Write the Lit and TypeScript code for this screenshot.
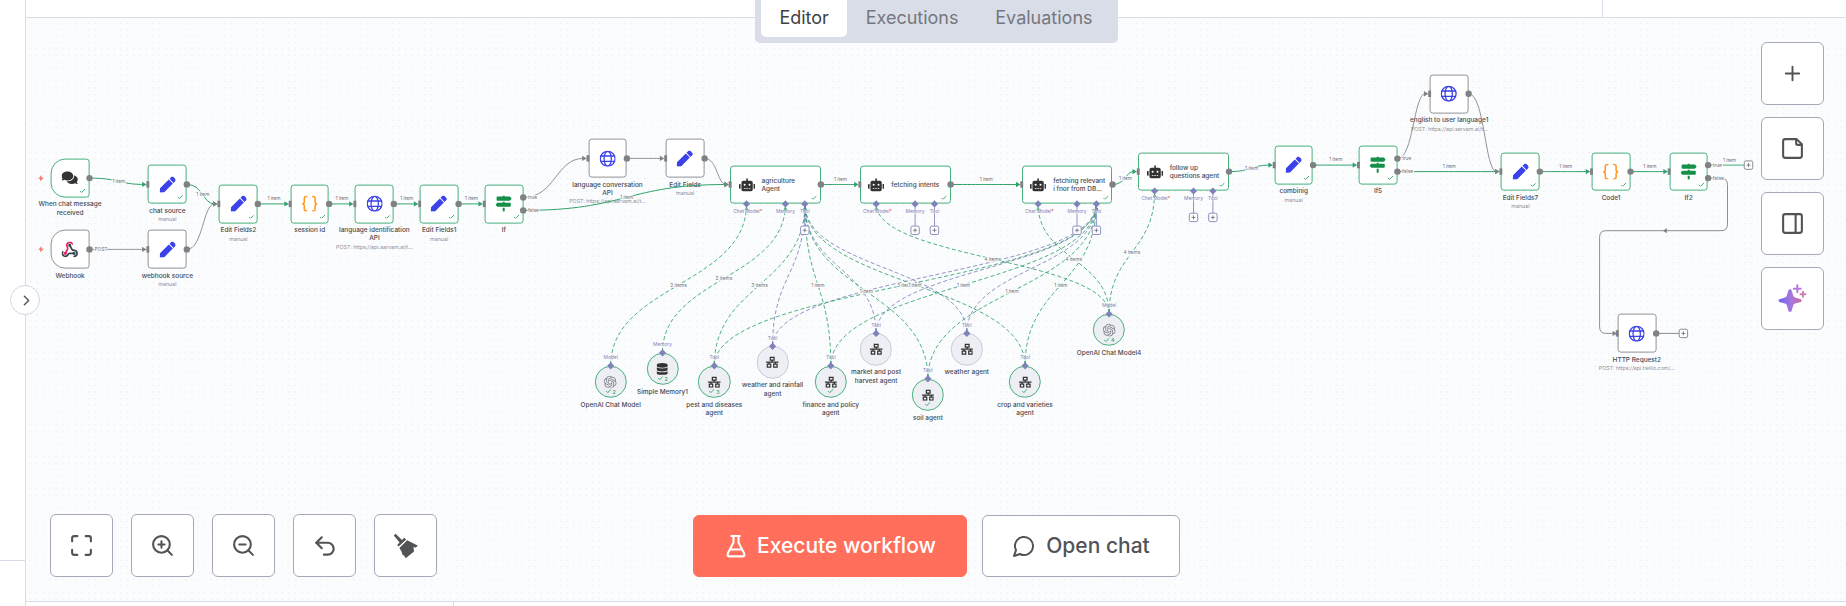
import { LitElement, html, svg, css, nothing } from "lit";
import { customElement, property } from "lit/decorators.js";
import { classMap } from "lit/directives/class-map.js";

const PEN = "M290.74 93.24l128.02 128.02-277.99 277.99-114.14 12.6C11.35 513.54-1.56 500.62.14 485.34l12.7-114.22 277.9-277.88zm207.2-19.06l-60.11-60.11c-18.75-18.75-49.16-18.75-67.91 0l-56.55 56.55 128.02 128.02 56.55-56.55c18.75-18.76 18.75-49.16 0-67.91z";
const COMMENTS = "M416 192c0-88.4-93.1-160-208-160S0 103.6 0 192c0 34.3 14.1 65.9 38 92-13.4 30.2-35.5 54.2-35.8 54.5-2.2 2.3-2.8 5.7-1.5 8.7S4.8 352 8 352c36.6 0 66.9-12.3 88.7-25 32.2 15.7 70.3 25 111.3 25 114.9 0 208-71.6 208-160zm122 220c23.9-26 38-57.7 38-92 0-66.9-53.5-124.2-129.3-148.1.9 6.6 1.3 13.3 1.3 20.1 0 105.9-107.7 192-240 192-10.8 0-21.3-.8-31.7-1.9C207.8 439.6 281.8 480 368 480c41 0 79.1-9.2 111.3-25 21.8 12.7 52.1 25 88.7 25 3.2 0 6.1-1.9 7.3-4.8 1.3-2.9.7-6.3-1.5-8.7-.3-.3-22.4-24.2-35.8-54.5z";
const SIGNS = "M507.31 84.69L464 41.37c-6-6-14.14-9.37-22.63-9.37H288V16c0-8.84-7.16-16-16-16h-32c-8.84 0-16 7.16-16 16v16H56c-13.25 0-24 10.75-24 24v80c0 13.25 10.75 24 24 24h385.37c8.49 0 16.62-3.37 22.63-9.37l43.31-43.31c6.25-6.26 6.25-16.38 0-22.63zM224 496c0 8.84 7.16 16 16 16h32c8.84 0 16-7.16 16-16V384h-64v112zm232-272H288v-32h-64v32H70.63c-8.49 0-16.62 3.37-22.63 9.37L4.69 276.69c-6.25 6.25-6.25 16.38 0 22.63L48 342.63c6 6 14.14 9.37 22.63 9.37H456c13.25 0 24-10.75 24-24v-80c0-13.25-10.75-24-24-24z";
const ROBOT = "M32,224H64V416H32A31.96,31.96,0,0,1,0,384V256A31.96,31.96,0,0,1,32,224Zm512-48V448a64.06,64.06,0,0,1-64,64H160a64.06,64.06,0,0,1-64-64V176a79.97,79.97,0,0,1,80-80H288V32a32,32,0,0,1,64,0V96H464A79.97,79.97,0,0,1,544,176ZM264,256a40,40,0,1,0-40,40A40,40,0,0,0,264,256Zm-8,128H192v32h64Zm96,0H288v32h64ZM456,256a40,40,0,1,0-40,40A40,40,0,0,0,456,256Zm-8,128H384v32h64ZM640,256V384a31.96,31.96,0,0,1-32,32H576V224h32A31.96,31.96,0,0,1,640,256Z";
const DATABASE = "M448 73.143v45.714C448 159.143 347.667 192 224 192S0 159.143 0 118.857V73.143C0 32.857 100.333 0 224 0s224 32.857 224 73.143zM448 176v102.857C448 319.143 347.667 352 224 352S0 319.143 0 278.857V176c48.125 33.143 136.208 48.572 224 48.572S399.874 209.143 448 176zm0 160v102.857C448 479.143 347.667 512 224 512S0 479.143 0 438.857V336c48.125 33.143 136.208 48.572 224 48.572S399.874 369.143 448 336z";
const OPENAI = "M22.2819 9.8211a5.9847 5.9847 0 0 0-.5157-4.9108 6.0462 6.0462 0 0 0-6.5098-2.9A6.0651 6.0651 0 0 0 4.9807 4.1818a5.9847 5.9847 0 0 0-3.9977 2.9 6.0462 6.0462 0 0 0 .7427 7.0966 5.98 5.98 0 0 0 .511 4.9107 6.051 6.051 0 0 0 6.5146 2.9001A5.9847 5.9847 0 0 0 13.2599 24a6.0557 6.0557 0 0 0 5.7718-4.2058 5.9894 5.9894 0 0 0 3.9977-2.9001 6.0557 6.0557 0 0 0-.7475-7.0729zm-9.022 12.6081a4.4755 4.4755 0 0 1-2.8764-1.0408l.1419-.0804 4.7783-2.7582a.7948.7948 0 0 0 .3927-.6813v-6.7369l2.02 1.1686a.071.071 0 0 1 .038.052v5.5826a4.504 4.504 0 0 1-4.4945 4.4944zm-9.6607-4.1254a4.4708 4.4708 0 0 1-.5346-3.0137l.142.0852 4.783 2.7582a.7712.7712 0 0 0 .7806 0l5.8428-3.3685v2.3324a.0804.0804 0 0 1-.0332.0615L9.74 19.9502a4.4992 4.4992 0 0 1-6.1408-1.6464zM2.3408 7.8956a4.485 4.485 0 0 1 2.3655-1.9728V11.6a.7664.7664 0 0 0 .3879.6765l5.8144 3.3543-2.0201 1.1685a.0757.0757 0 0 1-.071 0l-4.8303-2.7865A4.504 4.504 0 0 1 2.3408 7.872zm16.5963 3.8558L13.1038 8.364 15.1192 7.2a.0757.0757 0 0 1 .071 0l4.8303 2.7913a4.4944 4.4944 0 0 1-.6765 8.1042v-5.6772a.79.79 0 0 0-.407-.667zm2.0107-3.0231l-.142-.0852-4.7735-2.7818a.7759.7759 0 0 0-.7854 0L9.409 9.2297V6.8974a.0662.0662 0 0 1 .0284-.0615l4.8303-2.7866a4.4992 4.4992 0 0 1 6.6802 4.66zM8.3065 12.863l-2.02-1.1638a.0804.0804 0 0 1-.038-.0567V6.0742a4.4992 4.4992 0 0 1 7.3757-3.4537l-.142.0805L8.704 5.459a.7948.7948 0 0 0-.3927.6813zm1.0976-2.3654l2.602-1.4998 2.6069 1.4998v2.9994l-2.5974 1.4997-2.6067-1.4997Z";

/* Glyphs of the canvas nodes; each fills its own box. */
const glyph = (name: string) => {
  switch (name) {
    case "pen":
      return html`<svg viewBox="0 0 512 512" fill="#3b42e9"><path d=${PEN} /></svg>`;
    case "chat":
      return html`<svg viewBox="0 0 576 512" fill="#333"><path d=${COMMENTS} /></svg>`;
    case "signs":
      return html`<svg viewBox="0 0 512 512" fill="#159049"><path d=${SIGNS} /></svg>`;
    case "robot":
      return html`<svg viewBox="0 0 640 512" fill="#333"><path d=${ROBOT} /></svg>`;
    case "database":
      return html`<svg viewBox="-32 -10 512 532" fill="#333"><path d=${DATABASE} /></svg>`;
    case "openai":
      return html`<svg viewBox="0 0 24 24" fill="#7d7d87"><path d=${OPENAI} /></svg>`;
    case "globe":
      return html`<svg viewBox="0 0 24 24" fill="none" stroke="#3b42e9" stroke-width="1.9">
        <circle cx="12" cy="12" r="11" /><ellipse cx="12" cy="12" rx="5.4" ry="11" /><path d="M1.8 8h20.4M1.8 16h20.4" />
      </svg>`;
    case "code":
      return html`<svg viewBox="0 0 24 24" fill="none" stroke="#ff9922" stroke-width="2.3">
        <path d="M8.5 1.3H6.8C5 1.3 4 2.4 4 4v4.6C4 10.7 3 12 .8 12 3 12 4 13.3 4 15.4V20c0 1.6 1 2.7 2.8 2.7h1.7M15.5 1.3h1.7C19 1.3 20 2.4 20 4v4.6c0 2.1 1 3.4 3.2 3.4-2.2 0-3.2 1.3-3.2 3.4V20c0 1.6-1 2.7-2.8 2.7h-1.7" />
      </svg>`;
    case "webhook":
      return html`<svg viewBox="1 1 22 22" fill="none" stroke-width="2.3" stroke-linecap="round">
        <g stroke="#37474f"><path d="M18 16.98h-5.99c-1.1 0-1.95.94-2.48 1.9A4 4 0 0 1 2 17c.01-.7.2-1.4.57-2" />
        <path d="m12 6 3.13 5.73C15.66 12.7 16.9 13 18 13a4 4 0 0 1 0 8" /></g>
        <path stroke="#e91e63" d="m6 17 3.13-5.78c.53-.97.1-2.18-.5-3.1a4 4 0 1 1 6.89-4.06" />
        <circle cx="12" cy="6" r="1" stroke="#37474f" /><circle cx="6" cy="17" r="1" stroke="#e91e63" /><circle cx="18" cy="17" r="1" stroke="#37474f" />
      </svg>`;
    case "tool":
      return html`<svg viewBox="0 0 24 24" fill="none" stroke="#333" stroke-width="2.3">
        <path d="M8.5 2.8h7v5.4h-7zM2.8 15.5h6.4v5.7H2.8zM14.8 15.5h6.4v5.7h-6.4zM12 8.2V12M0 12h24M6 12v3.5M18 12v3.5" />
      </svg>`;
  }
  return nothing;
};

const tick = html`<svg class="tick" viewBox="0 0 6 4.5" fill="none" stroke="#2fa36b" stroke-width="0.95"><path d="M.4 2.3 2 3.9 5.6.4" /></svg>`;

interface FlowItem {
  x: number; y: number; icon: string; label: string;
  kind?: "step" | "trigger" | "agent" | "sub";
  sub?: string; done?: boolean; count?: number; port?: string; open?: string[]; loose?: boolean;
  outs?: string[]; noIn?: boolean;
}

/* x and y are the node's centre on the canvas; for agents x is the left edge. */
const ITEMS: FlowItem[] = [
  { x: 70.1, y: 178.1, icon: "chat", label: "When chat message\nreceived", kind: "trigger", done: true, noIn: true },
  { x: 70.1, y: 249.4, icon: "webhook", label: "Webhook", kind: "trigger", noIn: true },
  { x: 167.4, y: 184.4, icon: "pen", label: "chat source", sub: "manual", done: true },
  { x: 167.4, y: 249.4, icon: "pen", label: "webhook source", sub: "manual" },
  { x: 238.4, y: 203.9, icon: "pen", label: "Edit Fields2", sub: "manual", done: true },
  { x: 309.7, y: 203.9, icon: "code", label: "session id", done: true },
  { x: 374.4, y: 203.9, icon: "globe", label: "language identification\nAPI", sub: "POST: https://api.sarvam.ai/t...", done: true },
  { x: 439.2, y: 203.9, icon: "pen", label: "Edit Fields1", sub: "manual", done: true },
  { x: 503.8, y: 203.9, icon: "signs", label: "If", done: true, outs: ["true", "false"] },
  { x: 607.5, y: 158.4, icon: "globe", label: "language conversation\nAPI", sub: "POST: https://api.sarvam.ai/t..." },
  { x: 685.2, y: 158.4, icon: "pen", label: "Edit Fields", sub: "manual" },
  { x: 730.3, y: 184.5, icon: "robot", label: "agriculture\nAgent", kind: "agent", done: true, open: ["tool"] },
  { x: 860, y: 184.5, icon: "robot", label: "fetching intents", kind: "agent", done: true, open: ["memory", "tool"] },
  { x: 1021.9, y: 184.5, icon: "robot", label: "fetching relevant\ni fnor from DB...", kind: "agent", done: true, open: ["memory", "tool"] },
  { x: 1138.4, y: 171.6, icon: "robot", label: "follow up\nquestions agent", kind: "agent", done: true, open: ["memory", "tool"] },
  { x: 1293.7, y: 165.1, icon: "pen", label: "combinig", sub: "manual", done: true },
  { x: 1378, y: 165.1, icon: "signs", label: "If5", done: true, outs: ["true", "false"] },
  { x: 1449.2, y: 93.8, icon: "globe", label: "english to user language1", sub: "POST: https://api.sarvam.ai/t..." },
  { x: 1520.4, y: 171.6, icon: "pen", label: "Edit Fields7", sub: "manual", done: true },
  { x: 1611.1, y: 171.6, icon: "code", label: "Code1", done: true },
  { x: 1688.7, y: 171.6, icon: "signs", label: "If2", done: true, outs: ["true", "false"] },
  { x: 1636.8, y: 333.4, icon: "globe", label: "HTTP Request2", sub: "POST: https://api.twilio.com/..." },
  { x: 610.7, y: 381.8, icon: "openai", label: "OpenAI Chat Model", kind: "sub", done: true, count: 2, port: "Model" },
  { x: 662.5, y: 368.8, icon: "database", label: "Simple Memory1", kind: "sub", done: true, count: 2, port: "Memory" },
  { x: 714.3, y: 381.8, icon: "tool", label: "pest and diseases\nagent", kind: "sub", done: true, count: 3, port: "Tool" },
  { x: 772.6, y: 362.3, icon: "tool", label: "weather and rainfall\nagent", kind: "sub", port: "Tool", loose: true },
  { x: 830.8, y: 381.8, icon: "tool", label: "finance and policy\nagent", kind: "sub", done: true, port: "Tool" },
  { x: 876.1, y: 349.4, icon: "tool", label: "market and post\nharvest agent", kind: "sub", port: "Tool", loose: true },
  { x: 927.9, y: 394.8, icon: "tool", label: "soil agent", kind: "sub", done: true, port: "Tool" },
  { x: 966.8, y: 349.4, icon: "tool", label: "weather agent", kind: "sub", port: "Tool", loose: true },
  { x: 1025.1, y: 381.8, icon: "tool", label: "crop and varieties\nagent", kind: "sub", done: true, port: "Tool" },
  { x: 1109.1, y: 330, icon: "openai", label: "OpenAI Chat Model4", kind: "sub", done: true, count: 4, port: "Model" },
];

const GREEN = "#2fa36b", GREY = "#7f8185", VIOLET = "#7f82b9";

/* Links between outputs (right side) and inputs (left side). */
const LINKS: { a: [number, number]; b: [number, number]; on?: boolean; label?: string; lift?: boolean }[] = [
  { a: [89.5, 178.1], b: [148, 184.4], on: true, label: "1 item" },
  { a: [89.5, 249.4], b: [148, 249.4] },
  { a: [186.8, 184.4], b: [219, 203.9], on: true, label: "1 item" },
  { a: [186.8, 249.4], b: [219, 203.9] },
  { a: [257.8, 203.9], b: [290.3, 203.9], on: true, label: "1 item", lift: true },
  { a: [329.1, 203.9], b: [355, 203.9], on: true, label: "1 item", lift: true },
  { a: [393.8, 203.9], b: [419.8, 203.9], on: true, label: "1 item", lift: true },
  { a: [458.6, 203.9], b: [484.4, 203.9], on: true, label: "1 item", lift: true },
  { a: [523.2, 197.4], b: [588.1, 158.4] },
  { a: [626.9, 158.4], b: [665.8, 158.4] },
  { a: [523.2, 210.4], b: [730.3, 184.5], on: true, label: "1 item" },
  { a: [704.6, 158.4], b: [730.3, 184.5] },
  { a: [820.9, 184.5], b: [860, 184.5], on: true, label: "1 item", lift: true },
  { a: [950.6, 184.5], b: [1021.9, 184.5], on: true, label: "1 item", lift: true },
  { a: [1112.5, 184.5], b: [1138.4, 171.6], on: true, label: "1 item" },
  { a: [1229, 171.6], b: [1274.3, 165.1], on: true, label: "1 item" },
  { a: [1313.1, 165.1], b: [1358.6, 165.1], on: true, label: "1 item", lift: true },
  { a: [1397.4, 158.6], b: [1429.8, 93.8] },
  { a: [1397.4, 171.6], b: [1501, 171.6], on: true, label: "1 item", lift: true },
  { a: [1468.6, 93.8], b: [1501, 171.6] },
  { a: [1539.8, 171.6], b: [1591.7, 171.6], on: true, label: "1 item", lift: true },
  { a: [1630.5, 171.6], b: [1669.3, 171.6], on: true, label: "1 item", lift: true },
];

/* Dashed links from attached nodes up to an agent's bottom ports. */
const TOOL_A: [number, number] = [804.9, 204], TOOL_R: [number, number] = [1096.3, 204];
const ATTACH: { a: [number, number]; b: [number, number]; label?: string }[] = [
  { a: [772.6, 346], b: TOOL_A }, { a: [876.1, 333], b: TOOL_A }, { a: [966.8, 333], b: TOOL_A },
  { a: [772.6, 346], b: TOOL_R }, { a: [876.1, 333], b: TOOL_R }, { a: [966.8, 333], b: TOOL_R },
  { a: [610.7, 365.8], b: [746.5, 204], label: "2 items" },
  { a: [662.5, 352.8], b: [785.4, 204], label: "2 items" },
  { a: [714.3, 365.8], b: TOOL_A, label: "3 items" },
  { a: [830.8, 365.8], b: TOOL_A, label: "1 item" },
  { a: [927.9, 378.8], b: TOOL_A, label: "1 item" },
  { a: [714.3, 365.8], b: TOOL_R, label: "3 items" },
  { a: [1025.1, 365.8], b: TOOL_A, label: "1 item" },
  { a: [830.8, 365.8], b: TOOL_R, label: "1 item" },
  { a: [927.9, 378.8], b: TOOL_R, label: "1 item" },
  { a: [1025.1, 365.8], b: TOOL_R, label: "1 item" },
  { a: [1109.1, 314], b: [876.2, 204], label: "4 items" },
  { a: [1109.1, 314], b: [1038.1, 204], label: "4 items" },
  { a: [1109.1, 314], b: [1154.6, 191], label: "4 items" },
];

const PORTS = [{ id: "model", dx: 16.2, text: "Chat Model" }, { id: "memory", dx: 55.1, text: "Memory" }, { id: "tool", dx: 74.5, text: "Tool" }];

const diamond = (x: number, y: number) => svg`<path d="M${x} ${y - 3.6}l3.6 3.6-3.6 3.6-3.6-3.6z" fill=${VIOLET} />`;
const plus = (x: number, y: number, c: string) => svg`
  <rect x=${x - 4.2} y=${y - 4.2} width="8.4" height="8.4" rx="1.6" fill="#fff" stroke=${c} stroke-width="0.9" />
  <path d="M${x - 2} ${y}h4M${x} ${y - 2}v4" stroke="#75777e" stroke-width="0.9" />`;

@customElement("flow-node")
class FlowNode extends LitElement {
  @property({ attribute: false }) item!: FlowItem;
  static styles = css`
    :host { position: absolute; }
    .box { box-sizing: border-box; width: 38.8px; height: 38.8px; border: 1px solid #919398; border-radius: 3.2px; background: #fff; position: relative; display: flex; align-items: center; justify-content: center; transform: translate(-50%, -50%); }
    .done { border-color: #46b07b; }
    .trigger { border-radius: 14.5px 3.2px 3.2px 14.5px; }
    .agent { width: 90.6px; justify-content: flex-start; padding-left: 7.3px; gap: 6.8px; transform: translate(0, -50%); }
    .sub { width: 32.4px; height: 32.4px; border-radius: 50%; background: #eeeff5; }
    .loose { border-color: #c9cad9; }
    .glyph { width: 16.2px; height: 16.2px; display: flex; flex: none; }
    .sub .glyph { width: 12.8px; height: 12.8px; }
    .glyph svg { width: 100%; height: 100%; }
    .tick { width: 5.8px; height: 4.4px; flex: none; }
    .state { position: absolute; right: 2.8px; bottom: 3.4px; display: flex; }
    .sub .state { left: 0; right: 0; bottom: 3px; justify-content: center; align-items: center; gap: 1.2px; height: 5px; font-size: 5.2px; font-weight: 500; color: #2fa36b; }
    .title { font-size: 6.47px; line-height: 8.1px; font-weight: 500; color: #4a4b50; white-space: pre; }
    .airy { line-height: 8.8px; }
    .caption { position: absolute; left: -41px; top: 22.4px; width: 82px; display: flex; flex-direction: column; align-items: center; text-align: center; }
    .subcap { top: 18.8px; }
    .note { margin-top: 1.4px; font-size: 5.32px; line-height: 7.5px; color: #8d8f99; white-space: nowrap; }
    .bolt { position: absolute; left: -32px; top: -3.6px; width: 6px; height: 6.5px; }
  `;
  render() {
    const n = this.item;
    const kind = n.kind ?? "step";
    const agent = kind === "agent", sub = kind === "sub";
    return html`
      ${kind === "trigger" ? html`<svg class="bolt" viewBox="0 0 12 13" fill="#f9705f"><path d="M7.5 0 .5 7.5h4.3L3.800 13l7.700-7.700H7z" /></svg>` : nothing}
      <div class=${classMap({ box: true, [kind]: true, done: !!n.done, loose: !!n.loose })}>
        <div class="glyph">${glyph(n.icon)}</div>
        ${agent ? html`<div class="title">${n.label}</div>` : nothing}
        ${n.done ? html`<div class="state">${tick}${n.count ?? nothing}</div>` : nothing}
      </div>
      ${agent ? nothing : html`<div class=${classMap({ caption: true, subcap: sub })}>
        <div class=${classMap({ title: true, airy: !!n.loose })}>${n.label}</div>
        ${n.sub ? html`<div class="note">${n.sub}</div>` : nothing}
      </div>`}
    `;
  }
}

@customElement("flow-canvas")
class FlowCanvas extends LitElement {
  static styles = css`
    :host { position: absolute; inset: 0; display: block; }
    .wires { position: absolute; left: 0; top: 0; }
    .wires text { font-family: Inter, sans-serif; font-size: 4.85px; text-anchor: middle; }
    .tag { fill: #6f7178; stroke: #fbfcfe; stroke-width: 1.6px; paint-order: stroke; }
    .port { fill: #8082b8; stroke: #fbfcfe; stroke-width: 0.9px; stroke-opacity: 0.7; paint-order: stroke; }
    .req { fill: #f04848; }
  `;

  wire(l: (typeof LINKS)[number]) {
    const [x1, y1] = l.a, x2 = l.b[0] - 4.5, y2 = l.b[1], h = (l.b[0] - x1) / 2;
    const c = l.on ? GREEN : GREY;
    const tip = l.b[0] - 1.5;
    return svg`<path d="M${x1} ${y1}C${x1 + h} ${y1} ${l.b[0] - h} ${y2} ${x2} ${y2}" fill="none" stroke=${c} stroke-width=${l.on ? 1 : 0.85} />
      <path d="M${tip} ${y2}l-4.400-2.700v5.400z" fill=${c} />`;
  }
  attach(l: (typeof ATTACH)[number]) {
    const [x1, y1] = l.a, [x2, y2] = l.b, h = (y1 - y2) / 2, c = l.label ? GREEN : VIOLET;
    return svg`<path d="M${x1} ${y1}C${x1} ${y1 - h} ${x2} ${y2 + h} ${x2} ${y2}" fill="none" stroke=${c} stroke-width="0.85" stroke-dasharray="4 2.4" />
      <path d="M${x1} ${y1}v-5" stroke=${c} stroke-width="0.85" />
      <path d="M${x2} ${y2 + 2.6}l2 3.600h-4z" fill=${c} />`;
  }
  tag(x: number, y: number, t: string) {
    return svg`<text class="tag" x=${x} y=${y + 1.75}>${t}</text>`;
  }
  handles(n: FlowItem) {
    if (n.kind === "sub") return svg`${diamond(n.x, n.y - 16)}<text class="port" x=${n.x} y=${n.y - 22.7}>${n.port}</text>`;
    const agent = n.kind === "agent";
    const left = agent ? n.x : n.x - 19.4, right = agent ? n.x + 90.6 : n.x + 19.4;
    const outs = n.outs ? [n.y - 6.5, n.y + 6.5] : [n.y];
    return svg`
      ${n.noIn ? nothing : svg`<rect x=${left - 1.6} y=${n.y - 3.2} width="2.9" height="6.4" fill=${GREY} />`}
      ${outs.map((y) => svg`<circle cx=${right} cy=${y} r="3.2" fill=${GREY} />`)}
      ${(n.outs ?? []).map((t, i) => this.tag(right + (i ? 10.2 : 9.3), outs[i], t))}
      ${agent ? PORTS.map((p) => {
        const x = n.x + p.dx, y = n.y + 19.4, open = n.open!.includes(p.id);
        return svg`${open ? svg`<path d="M${x} ${y}v22" stroke=${VIOLET} stroke-width="0.85" />` : nothing}
          ${open ? plus(x, y + 26.4, VIOLET) : nothing}${diamond(x, y)}
          <text class="port" x=${x + (p.id === "model" ? 1.2 : 0)} y=${y + 8.8}>${p.text}${p.id === "model" ? svg`<tspan class="req">*</tspan>` : nothing}</text>`;
      }) : nothing}`;
  }
  render() {
    return html`
      ${ITEMS.map((n) => html`<flow-node .item=${n} style="left:${n.x}px;top:${n.y}px"></flow-node>`)}
      <svg class="wires" width="1846" height="601" viewBox="0 0 1846 601">
        ${LINKS.map((l) => this.wire(l))}
        <path d="M1708 178.200h13q6.500 0 6.500 6.500V224.200q0 6.500-6.500 6.500H1606.100q-6.500 0-6.500 6.500V326.900q0 6.500 6.500 6.500h8" fill="none" stroke=${GREY} stroke-width="0.9" />
        <path d="M1663 230.700l3.800-2.600v5.200zM1617 333.400l-4.400-2.700v5.400z" fill=${GREY} />
        <path d="M1708 165.100h36" stroke=${GREEN} stroke-width="0.9" /><path d="M1656 333.400h23" stroke=${GREY} stroke-width="0.9" />
        ${plus(1748.5, 165.1, GREY)}${plus(1683.4, 333.4, GREY)}
        ${ATTACH.map((l) => this.attach(l))}
        ${ITEMS.map((n) => this.handles(n))}
        ${[...LINKS, ...ATTACH].map((l: any) => l.label ? this.tag((l.a[0] + l.b[0]) / 2, (l.a[1] + l.b[1]) / 2 - (l.lift ? 5.6 : 0), l.label) : nothing)}
        ${this.tag(1729.5, 159.8, "1 item")}${this.tag(101, 249.4, "POST")}
      </svg>
    `;
  }
}

const line = (body: unknown, size = 24) => html`<svg width=${size} height=${size} viewBox="0 0 24 24" fill="none" stroke="#525356" stroke-width="2" stroke-linecap="round" stroke-linejoin="round">${body}</svg>`;

@customElement("app-root")
class AppRoot extends LitElement {
  static styles = css`
    :host { display: grid; grid-template-columns: 25px 1fr; height: 606px; overflow: hidden; position: relative; background: #fff; font-family: Inter, sans-serif; }
    .side { display: flex; flex-direction: column; border-right: 1px solid #d9dbe8; box-sizing: border-box; width: 26px; }
    .side-top { height: 560px; border-bottom: 1px solid #d9dbe8; }
    .main { display: flex; flex-direction: column; padding-left: 1px; }
    .head { height: 17px; display: flex; justify-content: flex-end; border-bottom: 1px solid #d9dbe8; }
    .head-end { width: 243px; border-left: 1px solid #d9dbe8; }
    .stage { height: 583px; background: #fbfcfe radial-gradient(circle at 3.2px 3.2px, #e3e5ec 0.5px, transparent 0.8px) 1px 2px / 6.475px 6.475px; }
    .foot { flex: 1; display: flex; border-top: 1px solid #d9dbe8; }
    .foot-left { width: 427px; border-right: 1px solid #d9dbe8; }
    .toggle { position: absolute; left: 10px; top: 285px; width: 30px; height: 30px; box-sizing: border-box; border: 1px solid #d4d7e3; border-radius: 50%; background: #fff; display: flex; align-items: center; justify-content: center; padding-left: 2px; }
    .tabs { position: absolute; left: 755px; top: -10px; width: 363px; height: 53px; box-sizing: border-box; padding: 6px; display: flex; background: #d9dde8; border-radius: 5px; }
    .tab { flex: none; display: flex; align-items: center; height: 41px; padding: 3px 18.4px 0; box-sizing: border-box; font-size: 18px; font-weight: 400; line-height: 20px; color: #75777e; border-radius: 5px; }
    .on { background: #fff; color: #414244; }
    .btn { box-sizing: border-box; width: 63px; height: 63px; display: flex; align-items: center; justify-content: center; background: #fff; border: 1px solid #a4a8b8; border-radius: 6px; }
    .right { position: absolute; left: 1761px; top: 42px; display: flex; flex-direction: column; gap: 12px; }
    .bottom { position: absolute; left: 50px; top: 514px; display: flex; gap: 18px; }
    .actions { position: absolute; left: 693px; top: 515px; display: flex; gap: 15px; font-size: 21px; font-weight: 500; color: #525356; }
    .act { width: 198px; height: 62px; gap: 10px; padding-bottom: 1px; }
    .run { width: 274px; gap: 11px; padding-left: 2px; background: #ff6f5c; border-color: #ff6f5c; color: #fff; }
  `;
  render() {
    return html`
      <div class="side"><div class="side-top"></div></div>
      <div class="main">
        <div class="head"><div class="head-end"></div></div>
        <div class="stage"></div>
        <div class="foot"><div class="foot-left"></div></div>
      </div>
      <flow-canvas></flow-canvas>
      <div class="toggle">${line(svg`<path d="m9 18 6-6-6-6" />`, 17)}</div>
      <div class="tabs"><div class="tab on">Editor</div><div class="tab">Executions</div><div class="tab">Evaluations</div></div>
      <div class="right">
        <div class="btn">${line(svg`<path d="M5 12h14M12 5v14" />`, 23)}</div>
        <div class="btn">${line(svg`<path d="M3 5a2 2 0 0 1 2-2h11l5 5v11a2 2 0 0 1-2 2H5a2 2 0 0 1-2-2zM15.500 3v4a1.500 1.500 0 0 0 1.500 1.500h4" />`, 25)}</div>
        <div class="btn">${line(svg`<rect x="3" y="3" width="18" height="18" rx="2" /><path d="M15 3v18" />`, 25)}</div>
        <div class="btn"><svg width="29" height="29" viewBox="0 0 29 29">
          <defs><linearGradient id="spark" x1="0" y1="0.5" x2="1" y2="0.5"><stop offset="0" stop-color="#6b63f2" /><stop offset="0.55" stop-color="#a877dd" /><stop offset="1" stop-color="#d0679d" /></linearGradient></defs>
          <g fill="url(#spark)"><path d="M12 5.200c1 0 1.500.5 1.800 1.600l1.400 4.800c.3 1 .9 1.600 1.900 1.900l4.800 1.400c1 .3 1.700.8 1.700 1.600s-.6 1.400-1.700 1.700l-4.800 1.400c-1 .3-1.600.9-1.900 1.900l-1.400 4.800c-.3 1.100-.8 1.600-1.800 1.600s-1.400-.6-1.700-1.600l-1.400-4.800c-.3-1-.9-1.600-1.900-1.900l-4.800-1.400C1.200 18 .6 17.400.6 16.500s.6-1.300 1.600-1.600L7 13.500c1-.3 1.600-.9 1.900-1.900l1.400-4.800c.3-1 .8-1.600 1.700-1.600z" /></g>
          <path d="M19.300 1.300v7M15.800 4.800h7" stroke="#b77bdd" stroke-width="2" stroke-linecap="round" /><path d="M25 7.700v5M22.500 10.200h5" stroke="#cf7cb6" stroke-width="1.9" stroke-linecap="round" />
        </svg></div>
      </div>
      <div class="bottom">
        <div class="btn">${line(svg`<path d="M3 8V5a2 2 0 0 1 2-2h3M16 3h3a2 2 0 0 1 2 2v3M21 16v3a2 2 0 0 1-2 2h-3M8 21H5a2 2 0 0 1-2-2v-3" />`, 25)}</div>
        <div class="btn">${line(svg`<circle cx="11" cy="11" r="8" /><path d="m21 21-4.350-4.350M11 8v6M8 11h6" />`, 25)}</div>
        <div class="btn">${line(svg`<circle cx="11" cy="11" r="8" /><path d="m21 21-4.350-4.350M8 11h6" />`, 25)}</div>
        <div class="btn">${line(svg`<path d="M9 14 4 9l5-5" /><path d="M4 9h10.500a5.500 5.500 0 0 1 0 11H11" />`, 26)}</div>
        <div class="btn"><svg width="26" height="26" viewBox="0 0 26 26" fill="#525356">
          <path d="M.8 2.600 2.600.8 9 7l2.300-2.200 1.900 1.600-7.600 7.200-1.500-1.700L6.600 9.500z" /><path d="M14.200 7.200 25 12.700 22.300 14.700 20.500 13.800 21 18.500 12.700 25.200 11 22.500 9.500 21.800 8.500 18.500 6.400 15z" />
        </svg></div>
      </div>
      <div class="actions">
        <div class="btn act run"><svg width="20" height="24" viewBox="0 0 20 24" fill="none" stroke="#fff" stroke-width="2.1" stroke-linejoin="round"><path d="M4.500 2h10M7.500 2v6.500L1.900 19.300q-1.200 3.100 1.800 3.100h12.600q3 0 1.800-3.100L12.500 8.500V2M4.600 15.500h10.800" /></svg>Execute workflow</div>
        <div class="btn act">${line(svg`<path d="M7.900 20A9 9 0 1 0 4 16.100L2 22Z" />`, 24)}Open chat</div>
      </div>
    `;
  }
}
